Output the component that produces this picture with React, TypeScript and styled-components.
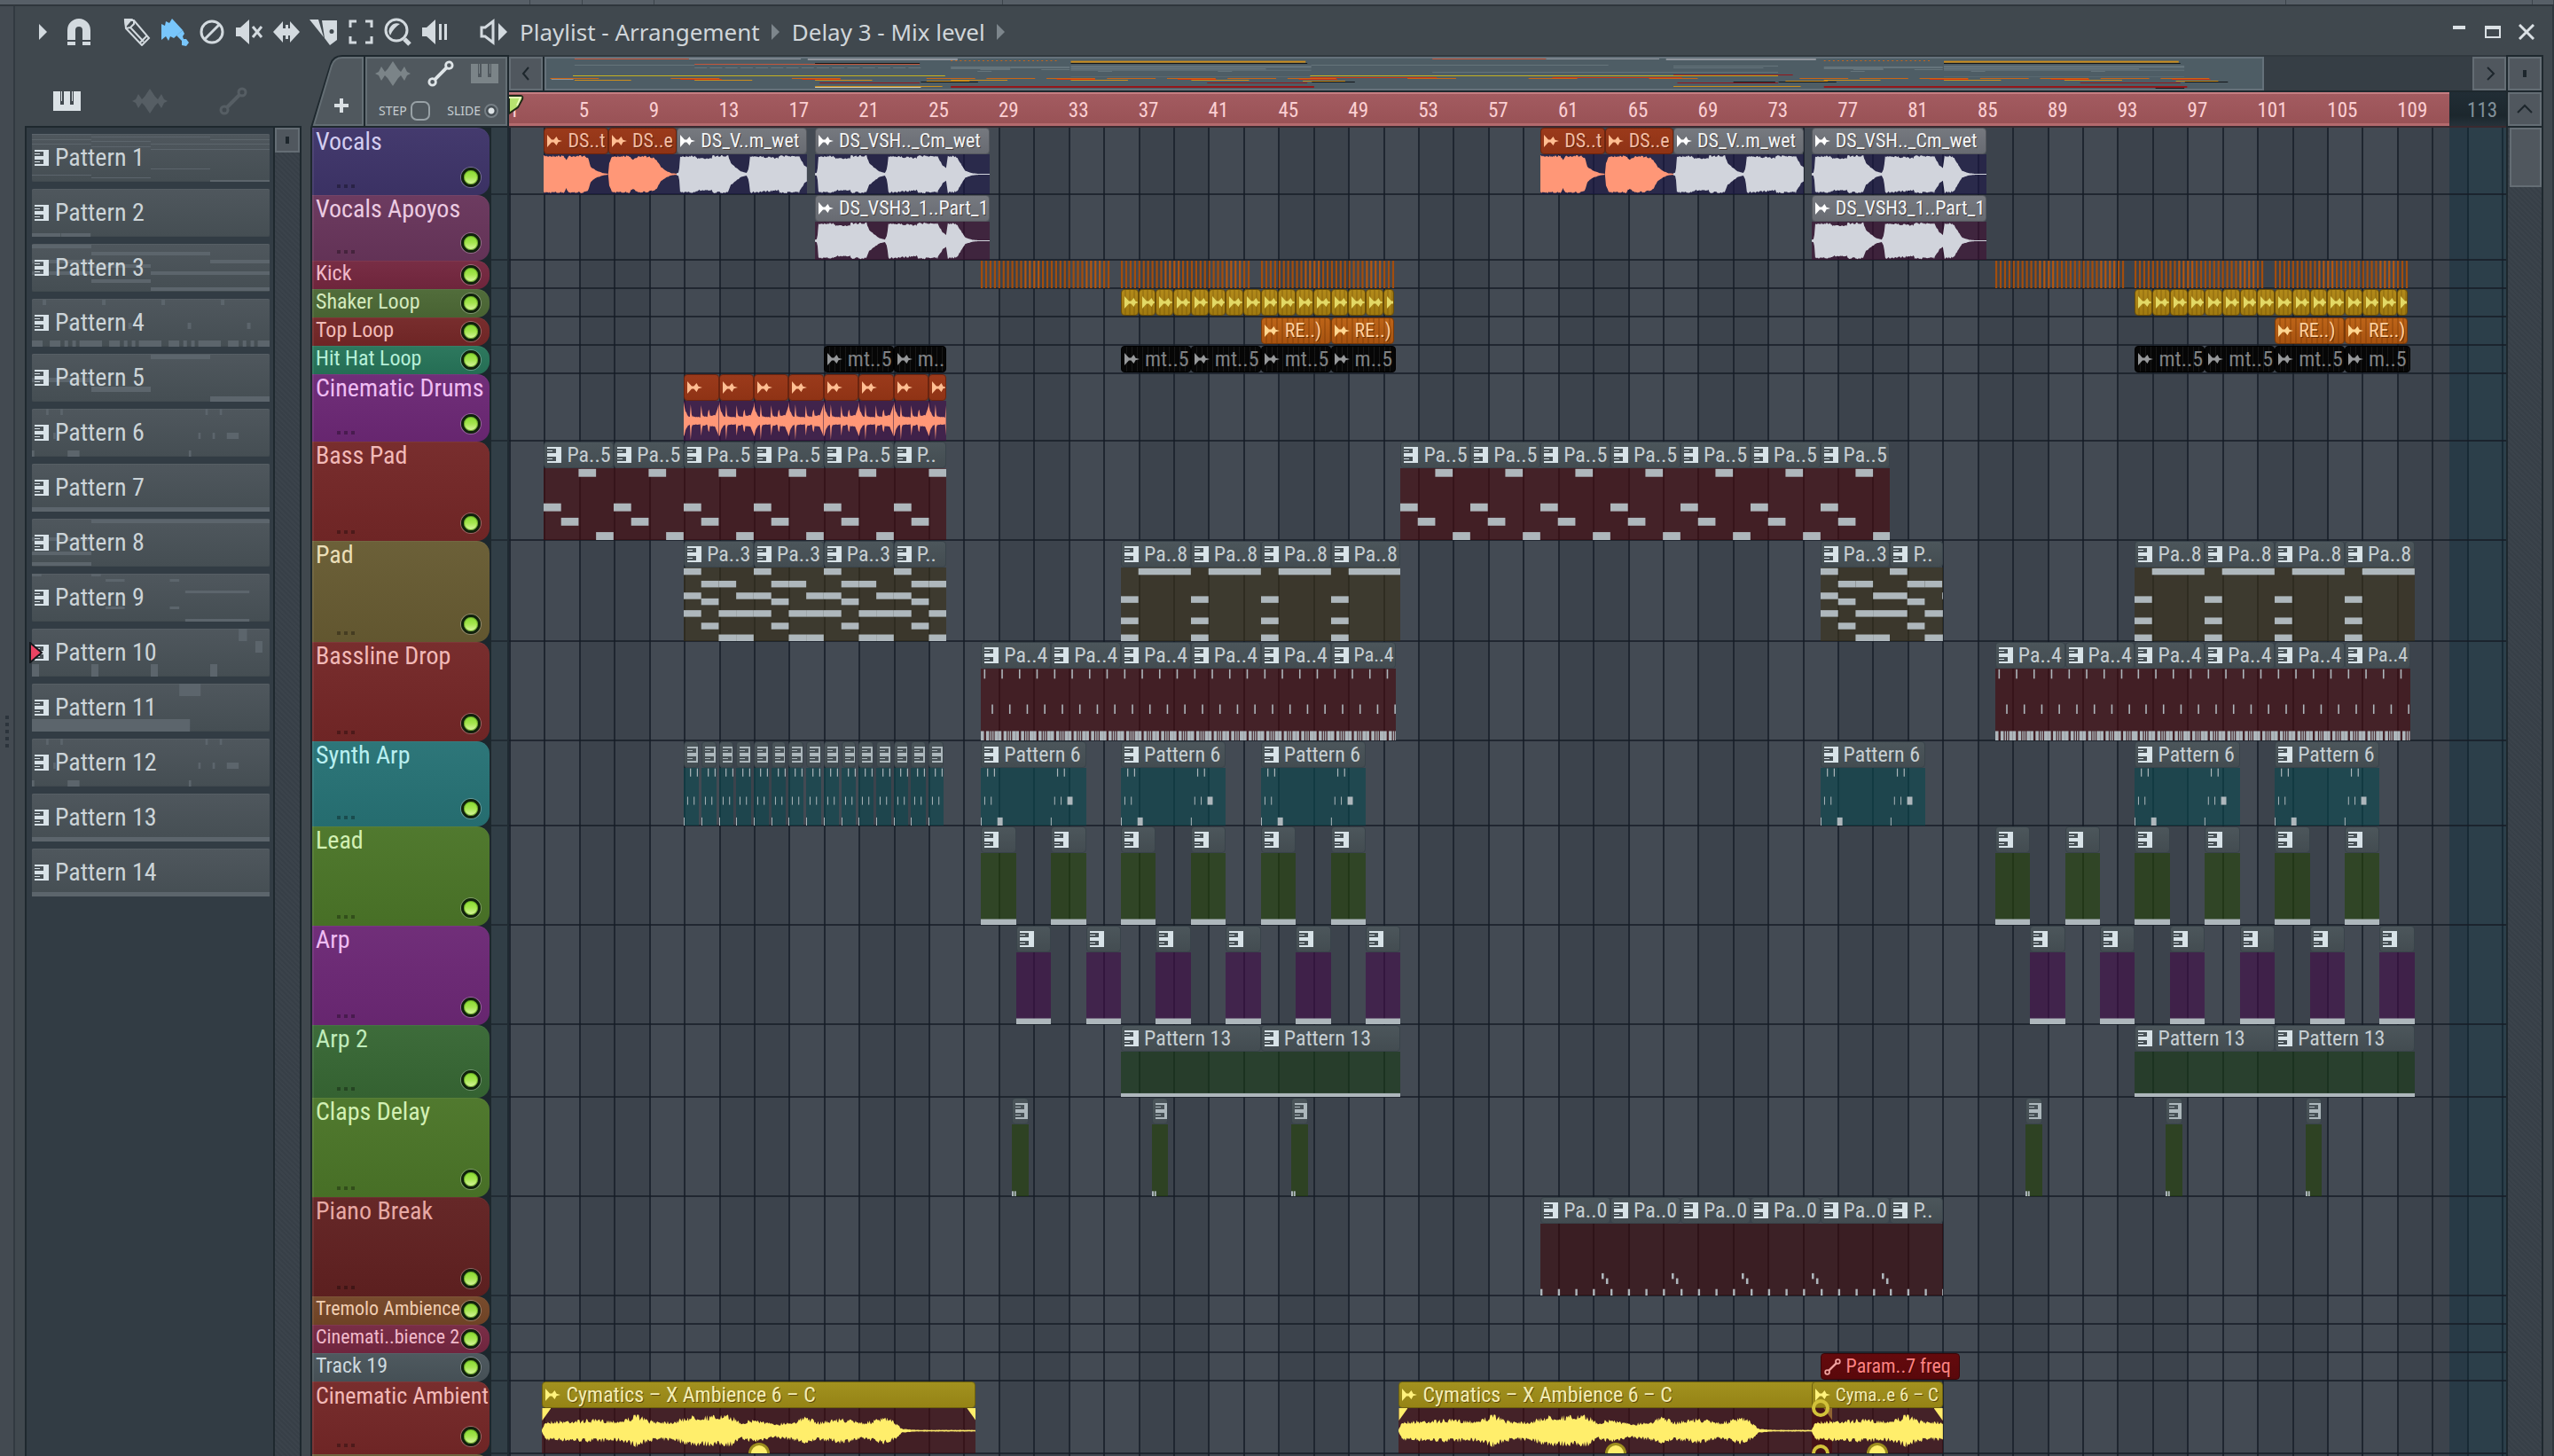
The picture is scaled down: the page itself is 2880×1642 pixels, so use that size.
import React from 'react';
import styled, { createGlobalStyle, css } from 'styled-components';

/* ---------- theme ---------- */

const narrow = '"Roboto Condensed", Roboto, "Liberation Sans", sans-serif';
const humanist = '"Noto Sans", "Open Sans", sans-serif';

const c = {
  frame: '#40484e',
  edge: '#434a51',
  dark: '#1e282e',
  well: '#323c44',
  button: '#50575e',
  rim: '#646d74',
  icon: '#d3dadf',
  note: '#aeb7bc',
};

const Global = createGlobalStyle`
  *, *::before, *::after { box-sizing: border-box; }
  body { margin: 0; background: ${c.frame}; color: #cdd4d9; font-family: ${narrow}; }
  button, input { margin: 0; padding: 0; font: inherit; color: inherit; }
  button { background: none; border: 0; cursor: pointer; }
  svg { display: block; }
`;

/* ---------- timeline scale ---------- */

const VISIBLE_BARS = 114.23;
const SONG_END = 112;
const pct = (bars: number) => `${(bars / VISIBLE_BARS) * 100}%`;
const span = (start: number, end: number) => ({ left: pct(start - 1), width: pct(end - start) });

/* ---------- small drawings ---------- */

const PianoClipIcon = () => (
  <svg width="16" height="18" viewBox="0 0 16 18" aria-hidden="true">
    <path fill="currentColor" fillRule="evenodd" d="M0 0h16v18H0zM0 2v5h10V2zM0 11v5h10v-5z" />
    <path fill="currentColor" d="M0 4h6v1H0zM0 13h6v1H0z" />
  </svg>
);

const AudioClipIcon = () => (
  <svg width="17" height="14" viewBox="0 0 17 14" aria-hidden="true">
    <path fill="currentColor" d="M0 0l5 5.500h2.500l3-3.500 2 3.800L17 7l-4.500 1.200-2 3.800-3-3.500H5L0 14z" />
  </svg>
);

const AutomationIcon = ({ size }: { size: number }) => (
  <svg width={size} height={size} viewBox="0 0 32 32" fill="none" stroke="currentColor" strokeWidth="3" aria-hidden="true">
    <circle cx="26" cy="6" r="4" />
    <circle cx="6" cy="26" r="4" />
    <path d="M9 23L23 9" strokeWidth="4" />
  </svg>
);

const WaveIcon = () => (
  <svg width="40" height="28" viewBox="0 0 40 28" aria-hidden="true">
    <path fill="currentColor" d="M0 14l4-2 3-6 4 6 3-3 6-9 6 9 3 3 4-6 3 6 4 2-4 2-3 6-4-6-3 3-6 9-6-9-3-3-4 6-3-6z" />
  </svg>
);

const KeysIcon = () => (
  <svg width="31" height="22" viewBox="0 0 31 22" aria-hidden="true">
    <path fill="currentColor" fillRule="evenodd" d="M0 0h31v22H0zM8 0v15h4V0zM19 0v15h4V0z" />
    <path fill="currentColor" d="M9 0h1v11H9zM21 0h1v11h-1z" />
  </svg>
);

type ToolName = 'magnet' | 'pencil' | 'brush' | 'ban' | 'mute' | 'slip' | 'slice' | 'select' | 'zoom' | 'play' | 'speaker';

const toolArt: Record<ToolName, React.ReactNode> = {
  magnet: (
    <>
      <path fill="currentColor" d="M3 25V14a13 13 0 0 1 26 0v11h-9V14a4 4 0 0 0-8 0v11z" />
      <path fill="currentColor" d="M3 27h9v4H3zM20 27h9v4h-9z" />
    </>
  ),
  pencil: (
    <g fill="none" stroke="currentColor" strokeWidth="2">
      <path d="M2 3l10 0 17 20-8 8L3 12z" />
      <path d="M3 12l5-1 4-4V3M8 11l15 16M19 28l8-8" />
      <path fill="currentColor" d="M2 2l7 0-6 7z" />
    </g>
  ),
  brush: (
    <g fill="currentColor">
      <path d="M1 7l4 2 1-5 4 2 3-5 12 13-10 9-4-2-2 5-3-5-5 4z" />
      <path d="M18 20l7-6 2 4-2 3 1 3h3l3 4-3 4-5-1v-5z" />
    </g>
  ),
  ban: (
    <g fill="none" stroke="currentColor" strokeWidth="3">
      <circle cx="16" cy="16" r="12" />
      <path d="M8 24L24 8" />
    </g>
  ),
  mute: (
    <>
      <path fill="currentColor" d="M1 11h5L16 2v28L6 21H1z" />
      <path stroke="currentColor" strokeWidth="3" d="M20 10l10 12M30 10L20 22" />
    </>
  ),
  slip: <path fill="currentColor" d="M1 16L12 4v8h3V8h3v4h2V4l11 12-11 12v-8h-2v4h-3v-4h-3v8z" />,
  slice: (
    <>
      <path fill="currentColor" fillRule="evenodd" d="M14 3h17v22l-8 6-6-8zM25 13a2 2 0 1 0 0 5 2 2 0 0 0 0-5z" />
      <path fill="currentColor" d="M0 2h10l6 20z" />
    </>
  ),
  select: <path fill="none" stroke="currentColor" strokeWidth="3" d="M4 11V4h7M21 4h7v7M28 21v7h-7M11 28H4v-7" />,
  zoom: (
    <>
      <circle cx="14" cy="14" r="12" fill="none" stroke="currentColor" strokeWidth="3" />
      <path fill="currentColor" d="M7 20a9 9 0 0 1 11-13q-7 4-11 13z" />
      <path stroke="currentColor" strokeWidth="5" d="M23 24l6 6" />
    </>
  ),
  play: (
    <>
      <path fill="currentColor" d="M1 11h5L16 2v28L6 21H1z" />
      <path fill="currentColor" d="M20 7h3v18h-3zM26 7h3v18h-3z" />
    </>
  ),
  speaker: (
    <>
      <path fill="none" stroke="currentColor" strokeWidth="3" d="M2 11h4l9-7v24l-9-7H2z" />
      <path fill="currentColor" d="M21 6l10 10-10 10z" />
    </>
  ),
};

/* ---------- window frame ---------- */

const Window = styled.div`
  display: flex;
  flex-direction: column;
  height: 100vh;
  overflow: hidden;
  background: ${c.frame};
`;

const HostStrip = styled.div`
  display: flex;
  flex: 0 0 7px;
  background: #575f67;
  border-bottom: 2px solid #2f363c;
`;

const HostCell = styled.div<{ $grow: number }>`
  flex: ${(p) => p.$grow} 0 0;
  border-right: 1px solid #3c444b;
`;

const Shell = styled.div`
  display: flex;
  flex: 1;
  min-height: 0;
`;

const EdgeGrip = styled.div`
  display: flex;
  flex: 0 0 17px;
  flex-direction: column;
  align-items: center;
  justify-content: center;
  gap: 4px;
  background: ${c.edge};
  border-right: 2px solid #323a41;
`;

const GripDot = styled.i`
  width: 4px;
  height: 4px;
  background: #2c343c;
`;

const RightEdge = styled.div`
  flex: 0 0 12px;
  border-right: 2px solid #2f373d;
`;

const Main = styled.main`
  display: flex;
  flex: 1;
  flex-direction: column;
  min-width: 0;
`;

const TitleBar = styled.header`
  display: flex;
  flex: 0 0 55px;
  align-items: center;
  padding: 3px 0 0 21px;
`;

const MenuArrow = styled.button<{ $crumb?: boolean }>`
  display: flex;
  justify-content: center;
  width: ${(p) => (p.$crumb ? 36 : 20)}px;
  color: ${(p) => (p.$crumb ? '#7d868c' : c.icon)};
`;

const ToolGroup = styled.div`
  display: flex;
  padding: 0 8px 0 10px;
`;

const ToolButton = styled.button<{ $active?: boolean; $gap?: number }>`
  display: flex;
  flex: 0 0 42px;
  align-items: center;
  justify-content: center;
  height: 36px;
  margin-left: ${(p) => p.$gap ?? 0}px;
  color: ${(p) => (p.$active ? '#78c6fb' : c.icon)};
`;

const Title = styled.span`
  font-family: ${humanist};
  font-size: 26px;
  line-height: 32px;
  color: #d0d6da;
  white-space: pre;
`;

const WindowButtons = styled.div`
  display: flex;
  margin-left: auto;
`;

const WindowButton = styled.button`
  display: flex;
  align-items: center;
  justify-content: center;
  width: 38px;
  height: 32px;
  color: #dbe1e5;
`;

const Workspace = styled.div`
  display: flex;
  flex: 1;
  min-height: 0;
`;

/* ---------- pattern picker ---------- */

const Picker = styled.aside`
  display: flex;
  flex: 0 0 323px;
  flex-direction: column;
  padding-left: 11px;
`;

const PickerTabs = styled.div`
  display: flex;
  flex: 0 0 80px;
  align-items: center;
  gap: 58px;
  padding: 24px 0 0 32px;
`;

const PickerTab = styled.button<{ $on?: boolean }>`
  color: ${(p) => (p.$on ? '#dbe2e6' : '#565e64')};
`;

const PickerBody = styled.div`
  display: flex;
  flex: 1;
  min-height: 0;
  border: 2px solid ${c.dark};
  border-bottom: 0;
  background: ${c.well};
`;

const PatternList = styled.ul`
  display: flex;
  flex: 1;
  flex-direction: column;
  gap: 8px;
  margin: 0;
  padding: 7px 4px 0 6px;
  list-style: none;
`;

const PatternButton = styled.button`
  position: relative;
  display: flex;
  align-items: center;
  gap: 7px;
  width: 100%;
  height: 54px;
  padding-left: 3px;
  border-radius: 2px;
  background: linear-gradient(#4f575d, #454e53);
  box-shadow: inset 0 1px #565e64, inset 0 -1px #414a4f;
  color: #ccd4d8;
  font-size: 28px;
  line-height: 54px;
  text-align: left;

  > * { position: relative; }
  > svg { color: #d8e2e8; }
`;

const PatternPreview = styled.span`
  && {
    position: absolute;
    inset: 0;
    color: #5c656c;
  }
`;

const PlayMarker = styled.span`
  && {
    position: absolute;
    left: -3px;
    top: 15px;
  }
`;

const scrollWell = css`
  background: repeating-linear-gradient(45deg, #373f47 0 2px, #3b434b 2px 4px);
`;

const PickerScroll = styled.div`
  display: flex;
  flex: 0 0 30px;
  flex-direction: column;
  border-left: 2px solid ${c.dark};
  ${scrollWell}
`;

const ChromeButton = styled.button<{ $w?: number; $h?: number }>`
  display: flex;
  flex: none;
  align-items: center;
  justify-content: center;
  width: ${(p) => (p.$w ? `${p.$w}px` : 'auto')};
  height: ${(p) => p.$h ?? 38}px;
  background: ${c.button};
  border: 2px solid ${c.rim};
  color: #1d262c;
`;

const Pip = styled.i`
  width: 4px;
  height: 8px;
  background: #1d262c;
`;

/* ---------- playlist ---------- */

const Playlist = styled.section`
  display: grid;
  flex: 1;
  min-width: 0;
  grid-template-columns: 224px minmax(0, 1fr) 42px;
  grid-template-rows: 42px 40px minmax(0, 1fr);
  margin-left: 10px;
`;

const Corner = styled.div`
  position: relative;
  display: flex;
  grid-row: 1 / 3;
  isolation: isolate;
`;

const CornerShape = styled.svg`
  position: absolute;
  inset: 0;
  z-index: -1;
`;

const AddTrack = styled.button`
  display: flex;
  flex: 0 0 61px;
  align-items: center;
  justify-content: center;
  padding: 32px 0 0 8px;
`;

const CornerTools = styled.div`
  display: flex;
  flex: 1;
  flex-direction: column;
  justify-content: space-between;
  padding: 5px 12px 3px 12px;
`;

const CornerRow = styled.div<{ $inset?: number }>`
  display: flex;
  align-items: center;
  justify-content: space-between;
  height: 32px;
  padding-left: ${(p) => p.$inset ?? 0}px;
`;

const ModeButton = styled.button<{ $on?: boolean }>`
  color: ${(p) => (p.$on ? '#dfe5e8' : '#7b8488')};
`;

const Option = styled.label`
  display: flex;
  align-items: center;
  gap: 4px;
  color: #c6cdd1;
  font-family: ${humanist};
  font-size: 14px;
  line-height: 22px;
`;

const StepBox = styled.input`
  appearance: none;
  width: 22px;
  height: 22px;
  border: 2px solid #98a1a6;
  border-radius: 7px;
`;

const SlideRadio = styled.input`
  appearance: none;
  width: 16px;
  height: 16px;
  border: 2px solid #767f85;
  border-radius: 50%;
  background: radial-gradient(circle, #dde3e6 0 3px, #454d53 4px);
`;

const Overview = styled.div`
  display: flex;
  background: #363e45;
  border-top: 2px solid #31393f;
  border-bottom: 2px solid ${c.dark};
`;

const OverviewTrack = styled.div`
  flex: 1;
  padding-left: 2px;
  background: linear-gradient(90deg, ${c.dark} 2px, transparent 2px);
`;

const OverviewThumb = styled.div`
  width: 89.2%;
  height: 38px;
  border: 2px solid #65717a;
  background: #4e5d65;
`;

const SideCell = styled.div<{ $top?: number }>`
  padding: ${(p) => p.$top ?? 0}px 2px 0;
  background: ${c.dark};
`;

const Ruler = styled.div`
  position: relative;
  overflow: hidden;
  height: 38px;
  background: linear-gradient(#212d35, #1c272d 70%, #26323a);
`;

const RulerSong = styled.div`
  position: absolute;
  inset: 0 auto 0 0;
  background: linear-gradient(#a35b60, #995256);
  border-top: 2px solid #c57e82;
  border-bottom: 3px solid #b46a6d;
`;

const RulerMark = styled.span<{ $off: boolean }>`
  position: absolute;
  top: 6px;
  color: ${(p) => (p.$off ? '#82919a' : '#fccfd2')};
  font-size: 23px;
  line-height: 30px;
`;

const PlayHead = styled.svg`
  position: absolute;
  left: 0;
  top: 3px;
`;

const RulerCell = styled.div`
  border-bottom: 2px solid #3a2a30;
`;

const Tracks = styled.div`
  position: relative;
  grid-column: 1 / 3;
  overflow: hidden;
  border-left: 2px solid ${c.dark};
`;

const GridUnderlay = styled.div`
  position: absolute;
  inset: 0 0 0 222px;
  display: flex;
  overflow: hidden;
`;

const GridColumn = styled.div<{ $alt: boolean }>`
  flex: 0 0 ${pct(2)};
  border-left: 2px solid #1f2630;
  background: ${(p) => (p.$alt ? '#3c434c' : '#434a53')};
`;

const AfterSong = styled.div`
  position: absolute;
  inset: 0 0 0 auto;
  background: rgba(15, 48, 62, 0.42);
`;

const TrackRow = styled.div<{ $h: number }>`
  position: relative;
  display: flex;
  height: ${(p) => p.$h}px;
`;

const HeadCell = styled.div`
  flex: 0 0 202px;
  background: #1c272d;
`;

const Head = styled.div<{ $bg: string; $ink: string }>`
  position: relative;
  width: 200px;
  height: 100%;
  padding-left: 4px;
  overflow: hidden;
  border-radius: 0 14px 14px 0;
  background: linear-gradient(rgba(255, 255, 255, 0.03), rgba(0, 0, 0, 0.05)), ${(p) => p.$bg};
  box-shadow: inset 0 1px rgba(255, 255, 255, 0.05), inset 2px 0 rgba(255, 255, 255, 0.07);
  color: ${(p) => p.$ink};
  white-space: nowrap;
`;

const TrackName = styled.span<{ $size: number }>`
  display: block;
  font-size: ${(p) => p.$size}px;
  line-height: ${(p) => (p.$size > 24 ? 32 : 28)}px;
`;

const Led = styled.input<{ $low: boolean }>`
  position: absolute;
  right: 10px;
  bottom: ${(p) => (p.$low ? 9 : 5)}px;
  appearance: none;
  width: 22px;
  height: 22px;
  border: 3px solid #10220c;
  border-radius: 50%;
  background: linear-gradient(#86d92f, #a6e650 50%, #dcf7a4);
  box-shadow: inset 0 0 0 1px #6fae2a, 0 0 0 1px rgba(255, 255, 255, 0.3);
`;

const HeadDots = styled.div`
  position: absolute;
  left: 28px;
  bottom: 8px;
  display: flex;
  gap: 4px;

  i {
    width: 4px;
    height: 4px;
    background: rgba(0, 0, 0, 0.3);
  }
`;

const PeakStrip = styled.div`
  flex: 0 0 20px;
  background: #313e46;
  border-right: 2px solid #1f2a31;
  border-bottom: 2px solid #212b33;
`;

const Lane = styled.div`
  position: relative;
  flex: 1;

  &::after {
    content: '';
    position: absolute;
    inset: auto 0 0 0;
    height: 2px;
    background: rgba(22, 28, 38, 0.75);
  }
`;

const TracksScroll = styled.div`
  padding: 0 2px;
  border-left: 2px solid ${c.dark};
  border-right: 2px solid ${c.dark};
  ${scrollWell}
`;

/* ---------- clips ---------- */

type Tone = 'pattern' | 'rust' | 'grey' | 'gold' | 'orange' | 'black' | 'olive' | 'auto';

const tones: Record<Tone, { bg: string; ink: string; icon: string; rim: string }> = {
  pattern: { bg: 'linear-gradient(#4c565b, #434c51)', ink: '#c6ced2', icon: '#d8e3e8', rim: '#39434a' },
  rust: { bg: 'linear-gradient(#9b3a1b, #8f3315)', ink: '#f3bda4', icon: '#ffbe92', rim: '#6b240f' },
  grey: { bg: 'linear-gradient(#76797f, #686b72)', ink: '#f2f4f6', icon: '#ffffff', rim: '#55585e' },
  gold: {
    bg: 'repeating-linear-gradient(90deg, transparent 0 3px, rgba(90, 60, 0, 0.22) 3px 5px), linear-gradient(#b28a1a, #a07a10)',
    ink: '#e6dc6a',
    icon: '#e3d966',
    rim: '#6a4e08',
  },
  orange: {
    bg: 'repeating-linear-gradient(90deg, transparent 0 4px, rgba(110, 50, 0, 0.3) 4px 6px), linear-gradient(#bd6418, #a85310)',
    ink: '#ffcf9c',
    icon: '#ffd792',
    rim: '#7a3a08',
  },
  black: {
    bg: 'repeating-linear-gradient(90deg, transparent 0 5px, rgba(255, 255, 255, 0.07) 5px 6px), #060606',
    ink: '#7f8183',
    icon: '#96989a',
    rim: '#000000',
  },
  olive: { bg: 'linear-gradient(#a2911f, #958315)', ink: '#f3ecb4', icon: '#fff27c', rim: '#6f620e' },
  auto: { bg: 'linear-gradient(#640a0d, #5a080b)', ink: '#ff8283', icon: '#f0a3a0', rim: '#3c0507' },
};

const ClipBox = styled.div`
  position: absolute;
  top: 0;
  bottom: 1px;
  z-index: 1;
  display: flex;
  flex-direction: column;
  overflow: hidden;
`;

const ClipHeader = styled.div<{ $tone: Tone; $size?: number }>`
  display: flex;
  flex: 0 0 30px;
  align-items: center;
  gap: 6px;
  padding-left: 3px;
  overflow: hidden;
  border: 1px solid ${(p) => tones[p.$tone].rim};
  border-radius: 4px;
  background: ${(p) => tones[p.$tone].bg};
  color: ${(p) => tones[p.$tone].ink};
  font-size: ${(p) => p.$size ?? 24}px;
  line-height: 28px;
  white-space: pre;
  text-shadow: ${(p) => (p.$tone === 'pattern' || p.$tone === 'black' ? 'none' : '1px 1px rgba(40, 15, 0, 0.5)')};

  svg {
    flex: none;
    color: ${(p) => tones[p.$tone].icon};
  }
`;

const ClipBody = styled.div<{ $bg: string }>`
  position: relative;
  flex: 1;
  min-height: 0;
  background: ${(p) => p.$bg};
  color: ${c.note};

  > svg {
    width: 100%;
    height: 100%;
  }
`;

const BodyCorner = styled.i<{ $side: 'left' | 'right' }>`
  position: absolute;
  top: 0;
  ${(p) => p.$side}: 0;
  width: 10px;
  height: 14px;
  background: #ffee6b;
  clip-path: ${(p) => (p.$side === 'left' ? 'polygon(0 0, 100% 0, 0 100%)' : 'polygon(0 0, 100% 0, 100% 100%)')};
`;

const TensionKnob = styled.i`
  position: absolute;
  left: 50%;
  bottom: -12px;
  width: 24px;
  height: 24px;
  margin-left: -12px;
  border: 3px solid #9c8d1e;
  border-radius: 50%;
  background: #ffee6b;
`;

const FadeKnob = styled.i<{ $end: 'top' | 'bottom' }>`
  position: absolute;
  left: 0;
  ${(p) => p.$end}: -10px;
  width: 20px;
  height: 20px;
  border: 4px solid #d2c23a;
  border-radius: 50%;
`;

/** Tint a clip body so that the lane grid stays visible beneath it. */
const tint = (r: number, g: number, b: number) => {
  const solve = (v: number, under: number) => Math.max(0, Math.round((v - under * 0.4) / 0.6));
  return `rgba(${solve(r, 67)}, ${solve(g, 74)}, ${solve(b, 83)}, 0.6)`;
};

type Note = [x: number, y: number, w: number, h: number];

const everyBar = (bars: number, make: (bar: number) => Note[]) =>
  Array.from({ length: bars }, (_, bar) => make(bar)).flat();

const arpHits = (at: number): Note[] => [
  [at + 0.36, 1, 0.06, 14],
  [at + 0.75, 1, 0.06, 14],
  [at + 0.2, 50, 0.05, 14],
  [at + 0.57, 50, 0.05, 14],
  [at, 86, 0.05, 14],
];

const phrases: Record<string, Note[]> = {
  p5: [[0, 49, 1, 11], [1, 69, 1, 11], [2, 1, 1, 11], [3, 89, 1, 11]],
  p3: [
    [0, 1, 1, 9], [0, 34, 1, 9], [0, 58, 1, 9],
    [1, 18, 1, 9], [1, 42, 1, 9], [1, 75, 1, 9],
    [2, 18, 1, 9], [2, 58, 1, 9], [2, 91, 1, 9],
    [3, 34, 1, 9], [3, 58, 1, 9], [3, 91, 1, 9],
  ],
  p8: [[1, 1, 3, 9], [0, 39, 1, 9], [0, 68, 1, 9], [0, 91, 1, 9]],
  p4: everyBar(4, (b) => [
    [b + 0.18, 1, 0.08, 13],
    [b + 0.62, 50, 0.08, 13],
    [b, 87, 0.18, 13],
    [b + 0.3, 87, 0.18, 13],
    [b + 0.54, 87, 0.07, 13],
    [b + 0.66, 87, 0.07, 13],
    [b + 0.79, 87, 0.21, 13],
  ]),
  p6: [...arpHits(0), ...arpHits(4), [0.95, 86, 0.3, 14], [4.95, 50, 0.3, 14]],
  hold: [[0, 92, 99, 8]],
  clap: [[0, 93, 0.1, 7], [0.14, 93, 0.1, 7]],
  p10: [...everyBar(4, (b): Note[] => [[b, 91, 0.12, 9]]), [3.5, 69, 0.13, 8], [3.75, 76, 0.13, 8]],
};

const NoteRoll = ({ notes, length }: { notes: Note[]; length: number }) => (
  <svg viewBox={`0 0 ${length} 100`} preserveAspectRatio="none" aria-hidden="true">
    {notes.map(([x, y, w, h], i) => (
      <rect key={i} x={x} y={y} width={w} height={h} fill="currentColor" />
    ))}
  </svg>
);

type Envelope = [at: number, level: number][];

const envelopes: Record<string, { shape: Envelope; rough: number; repeat?: boolean; color: string; gain?: number }> = {
  voice: {
    color: '#d1d4dc',
    rough: 0.1,
    shape: [
      [0, 0.05], [0.14, 0.1], [0.18, 0.98], [1, 1], [1.2, 0.88], [2, 0.88], [2.05, 1], [2.95, 1], [3.1, 0.6], [3.4, 0.35],
      [3.7, 0.15], [4, 0.07], [4.12, 0.3], [4.2, 1], [5, 0.95], [5.8, 0.88], [5.9, 1], [7, 1], [7.3, 0.5], [7.5, 0.35],
      [7.6, 1], [8.1, 0.95], [8.4, 0.5], [8.6, 0.18], [9, 0.06], [9.4, 0.02], [10, 0.02],
    ],
  },
  tail: {
    color: '#ff9777',
    rough: 0.1,
    shape: [[0, 1], [1.15, 1], [1.3, 0.78], [1.45, 1], [2.4, 1], [2.55, 0.85], [2.7, 0.4], [3, 0.2], [3.4, 0.06], [3.8, 0.02]],
  },
  tailB: {
    color: '#ff9777',
    rough: 0.1,
    shape: [
      [0, 0.1], [0.05, 0.6], [0.2, 0.98], [1.2, 1], [1.4, 0.78], [1.7, 1], [2.4, 0.95], [2.75, 0.8], [3, 0.4], [3.3, 0.18],
      [3.6, 0.06], [4, 0.02],
    ],
  },
  drums: {
    color: '#ff9777',
    rough: 0.2,
    repeat: true,
    shape: [
      [0, 1], [0.08, 0.6], [0.25, 0.28], [0.36, 0.22], [0.4, 1], [0.46, 0.26], [0.95, 0.2], [1, 0.95], [1.06, 0.28], [1.38, 0.22],
      [1.42, 0.85], [1.5, 0.3], [1.8, 0.35], [1.94, 0.7], [2, 0.8],
    ],
  },
  ambience: {
    color: '#ffee6b',
    rough: 0.38,
    gain: 0.85,
    shape: [
      [0, 0.05], [0.2, 0.55], [1.5, 0.6], [3, 0.65], [4.5, 0.6], [5.5, 0.95], [6.1, 0.6], [7.5, 0.55], [8.5, 0.85], [10.8, 0.88],
      [11.4, 0.5], [12.2, 0.68], [13.2, 0.4], [14.4, 0.55], [15.2, 0.85], [15.7, 0.5], [17, 0.72], [18.5, 0.5], [19.7, 0.78],
      [20.2, 0.5], [20.6, 0.12], [21.4, 0.05], [25, 0.05],
    ],
  },
};

const levelAt = (shape: Envelope, at: number) => {
  const next = shape.findIndex(([x]) => x >= at);
  if (next <= 0) return shape[next === 0 ? 0 : shape.length - 1][1];
  const [x0, y0] = shape[next - 1];
  const [x1, y1] = shape[next];
  return y0 + ((y1 - y0) * (at - x0)) / (x1 - x0);
};

const Waveform = ({ name, length }: { name: string; length: number }) => {
  const { shape, rough, repeat, color, gain = 1 } = envelopes[name];
  const period = shape[shape.length - 1][0];
  let seed = 7;
  const noise = () => {
    seed = (seed * 16807) % 2147483647;
    return seed / 2147483647;
  };
  const steps = Math.round(length * 20);
  const top: string[] = [];
  const bottom: string[] = [];
  for (let i = 0; i <= steps; i += 1) {
    const x = (i / steps) * length;
    const base = 48 * gain * levelAt(shape, repeat ? x % period : x);
    top.push(`${x.toFixed(3)} ${(50 - base * (1 - rough * noise())).toFixed(1)}`);
    bottom.unshift(`${x.toFixed(3)} ${(50 + base * (1 - rough * noise())).toFixed(1)}`);
  }
  return (
    <svg viewBox={`0 0 ${length} 100`} preserveAspectRatio="none" aria-hidden="true">
      <path fill={color} d={`M${top.join('L')}L${bottom.join('L')}z`} />
    </svg>
  );
};

interface ClipData {
  at: number;
  to: number;
  label?: string;
  tone?: Tone;
  phrase?: string;
  wave?: string;
  faded?: boolean;
  size?: number;
  crossfade?: boolean;
}

const Dimmer = styled.span`
  display: flex;
  opacity: 0.7;
`;

const clipIcon = (tone: Tone) => {
  if (tone === 'pattern') return <PianoClipIcon />;
  if (tone === 'auto') return <AutomationIcon size={19} />;
  return <AudioClipIcon />;
};

const Clip = ({ clip, body }: { clip: ClipData; body?: string }) => {
  const tone = clip.tone ?? 'pattern';
  const length = clip.to - clip.at;
  return (
    <ClipBox style={span(clip.at, clip.to)}>
      <ClipHeader $tone={tone} $size={clip.size}>
        {clip.faded ? <Dimmer>{clipIcon(tone)}</Dimmer> : clipIcon(tone)}
        {clip.label}
      </ClipHeader>
      {body && (
        <ClipBody $bg={body}>
          {clip.phrase && <NoteRoll notes={phrases[clip.phrase]} length={length} />}
          {clip.wave && <Waveform name={clip.wave} length={length} />}
          {clip.wave === 'ambience' && (
            <>
              {!clip.crossfade && <BodyCorner $side="left" />}
              <BodyCorner $side="right" />
              <TensionKnob />
              {clip.crossfade && (
                <>
                  <FadeKnob $end="top" />
                  <FadeKnob $end="bottom" />
                </>
              )}
            </>
          )}
        </ClipBody>
      )}
    </ClipBox>
  );
};

const KickRun = styled.div`
  position: absolute;
  top: 0;
  bottom: 1px;
  z-index: 1;

  > svg {
    width: 100%;
    height: 100%;
  }
`;

const KickHits = ({ at, to }: { at: number; to: number }) => {
  const hits = Math.round((to - at) * 4);
  return (
    <KickRun style={span(at, to)}>
      <svg viewBox={`0 0 ${hits} 10`} preserveAspectRatio="none" aria-hidden="true">
        {Array.from({ length: hits }, (_, i) => (
          <rect key={i} x={i} y={0} width={0.45} height={10} fill={i % 14 > 9 ? '#b4560e' : '#a34d0c'} />
        ))}
      </svg>
    </KickRun>
  );
};

/* ---------- song data ---------- */

const run = (start: number, end: number, step: number, rest: Partial<ClipData>, short?: string): ClipData[] => {
  const out: ClipData[] = [];
  for (let at = start; at < end; at += step) {
    const to = Math.min(at + step, end);
    out.push({ at, to, ...rest, label: short && to - at < step ? short : rest.label });
  }
  return out;
};

const every = (start: number, end: number, step: number, length: number, rest: Partial<ClipData>): ClipData[] => {
  const out: ClipData[] = [];
  for (let at = start; at < end; at += step) out.push({ at, to: at + length, ...rest });
  return out;
};

const shift = (clips: ClipData[], bars: number) => clips.map((k) => ({ ...k, at: k.at + bars, to: k.to + bars }));
const twice = (clips: ClipData[], bars: number) => [...clips, ...shift(clips, bars)];

interface TrackData {
  name: string;
  height: number;
  color: string;
  ink: string;
  size?: number;
  body?: string;
  clips?: ClipData[];
  kicks?: [number, number][];
}

const tracks: TrackData[] = [
  {
    name: 'Vocals', height: 76, color: '#3e3469', ink: '#d3cdf0', body: tint(43, 42, 75),
    clips: twice([
      { at: 3, to: 6.68, label: 'DS..t', tone: 'rust', wave: 'tail', size: 22 },
      { at: 6.68, to: 10.6, label: 'DS..e', tone: 'rust', wave: 'tailB', size: 22 },
      { at: 10.6, to: 18.05, label: 'DS_V..m_wet', tone: 'grey', wave: 'voice', size: 22 },
      { at: 18.5, to: 28.5, label: 'DS_VSH.._Cm_wet', tone: 'grey', wave: 'voice', size: 22 },
    ], 57),
  },
  {
    name: 'Vocals Apoyos', height: 74, color: '#68355b', ink: '#eccbe2', body: tint(64, 38, 62),
    clips: twice([{ at: 18.5, to: 28.5, label: 'DS_VSH3_1..Part_1', tone: 'grey', wave: 'voice', size: 22 }], 57),
  },
  {
    name: 'Kick', height: 32, color: '#74273f', ink: '#f0b9ca', size: 24,
    kicks: [[28, 35.5], [36, 43.5], [44, 51.75], [86, 93.5], [94, 101.5], [102, 109.75]],
  },
  {
    name: 'Shaker Loop', height: 32, color: '#4c6835', ink: '#d3e9bd', size: 24,
    clips: twice(run(36, 51.6, 1, { tone: 'gold' }), 58),
  },
  {
    name: 'Top Loop', height: 32, color: '#742727', ink: '#f2bcb8', size: 24,
    clips: twice(run(44, 51.6, 4, { tone: 'orange', label: 'RE..)', size: 22 }), 58),
  },
  {
    name: 'Hit Hat Loop', height: 32, color: '#277459', ink: '#b6efd8', size: 24,
    clips: [
      ...run(19, 26, 4, { tone: 'black', label: 'mt..5' }, 'm..'),
      ...twice(run(36, 51.73, 4, { tone: 'black', label: 'mt..5' }, 'm..5'), 58),
    ],
  },
  {
    name: 'Cinematic Drums', height: 76, color: '#6c2875', ink: '#efbdf3', body: tint(66, 36, 76),
    clips: run(11, 26, 2, { tone: 'rust', wave: 'drums' }),
  },
  {
    name: 'Bass Pad', height: 112, color: '#742727', ink: '#f2b9b7', body: tint(69, 35, 40),
    clips: [
      ...run(3, 26, 4, { label: 'Pa..5', phrase: 'p5' }, 'P..'),
      ...run(52, 80, 4, { label: 'Pa..5', phrase: 'p5' }),
    ],
  },
  {
    name: 'Pad', height: 114, color: '#675b32', ink: '#ebdfb8', body: tint(62, 59, 47),
    clips: [
      ...run(11, 26, 4, { label: 'Pa..3', phrase: 'p3' }, 'P..'),
      ...run(36, 52, 4, { label: 'Pa..8', phrase: 'p8' }),
      ...run(76, 83, 4, { label: 'Pa..3', phrase: 'p3' }, 'P..'),
      ...run(94, 110, 4, { label: 'Pa..8', phrase: 'p8' }),
    ],
  },
  {
    name: 'Bassline Drop', height: 112, color: '#742727', ink: '#f2b9b7', body: tint(69, 35, 40),
    clips: twice([
      ...run(28, 48, 4, { label: 'Pa..4', phrase: 'p4' }),
      { at: 48, to: 51.73, label: 'Pa..4', phrase: 'p4', size: 22 },
    ], 58),
  },
  {
    name: 'Synth Arp', height: 96, color: '#277275', ink: '#b8eff0', body: tint(33, 72, 80),
    clips: [
      ...every(11, 26, 1, 0.85, { phrase: 'p6', faded: true }),
      ...every(28, 52, 8, 6, { label: 'Pattern 6', phrase: 'p6' }),
      { at: 76, to: 82, label: 'Pattern 6', phrase: 'p6' },
      ...every(94, 110, 8, 6, { label: 'Pattern 6', phrase: 'p6' }),
    ],
  },
  {
    name: 'Lead', height: 112, color: '#4b7528', ink: '#d3f0b4', body: tint(49, 70, 38),
    clips: twice(every(28, 50, 4, 2, { phrase: 'hold' }), 58),
  },
  {
    name: 'Arp', height: 112, color: '#6c2875', ink: '#efbdf3', body: tint(66, 36, 76),
    clips: twice(every(30, 52, 4, 2, { phrase: 'hold' }), 58),
  },
  {
    name: 'Arp 2', height: 82, color: '#376734', ink: '#c0ecbb', body: tint(42, 65, 46),
    clips: twice(run(36, 52, 8, { label: 'Pattern 13', phrase: 'hold' }), 58),
  },
  {
    name: 'Claps Delay', height: 112, color: '#4b7528', ink: '#d3f0b4', body: tint(49, 70, 38),
    clips: twice(every(29.75, 46, 8, 0.95, { phrase: 'clap', faded: true }), 58),
  },
  {
    name: 'Piano Break', height: 112, color: '#612121', ink: '#e7a9a5', body: tint(61, 33, 38),
    clips: run(60, 83, 4, { label: 'Pa..0', phrase: 'p10' }, 'P..'),
  },
  { name: 'Tremolo Ambience', height: 32, color: '#744627', ink: '#f0cdb0', size: 22 },
  { name: 'Cinemati..bience 2', height: 32, color: '#752741', ink: '#f0b9ca', size: 22 },
  {
    name: 'Track 19', height: 32, color: '#49545a', ink: '#ccd8de', size: 24,
    clips: [{ at: 76, to: 84, label: 'Param..7 freq', tone: 'auto', size: 22 }],
  },
  {
    name: 'Cinematic Ambient', height: 82, color: '#742727', ink: '#f2b9b7', size: 26, body: tint(69, 35, 40),
    clips: [
      { at: 2.9, to: 27.7, label: 'Cymatics – X Ambience 6 – C', tone: 'olive', wave: 'ambience' },
      { at: 51.9, to: 76.7, label: 'Cymatics – X Ambience 6 – C', tone: 'olive', wave: 'ambience' },
      { at: 75.5, to: 83, label: 'Cyma..e 6 – C', tone: 'olive', wave: 'ambience', size: 21, crossfade: true },
    ],
  },
  { name: '', height: 32, color: '#675b32', ink: '#ebdfb8' },
];

/* Pattern previews are drawn on a grid of 100 x 54. */
const previews: Note[][] = [
  [[0, 0, 25, 1], [0, 6, 25, 1], [0, 11, 25, 1], [25, 3, 25, 1], [25, 8, 25, 1], [25, 14, 25, 1], [50, 3, 25, 1], [50, 11, 25, 1], [50, 17, 25, 1], [75, 6, 25, 1], [75, 11, 25, 1], [75, 17, 25, 1], [50, 39, 25, 1], [0, 46, 25, 1], [25, 49, 25, 1], [75, 52, 25, 2]],
  [[0, 50, 12, 4], [12.200, 50, 12.500, 4]],
  [[0, 1, 25, 4], [25, 9, 50, 4], [75, 18, 25, 4], [0, 18, 25, 4], [25, 23, 25, 4], [0, 31, 25, 4], [50, 31, 50, 4], [25, 40, 25, 4], [50, 49, 50, 4]],
  everyBar(4, (b) => [
    [b * 25 + 4.5, 1, 1.500, 6], [b * 25 + 15.500, 27, 1.500, 7],
    [b * 25, 47, 4.5, 7], [b * 25 + 7.5, 47, 4.5, 7], [b * 25 + 13.700, 47, 1.500, 7], [b * 25 + 17, 47, 1.500, 7], [b * 25 + 20, 47, 5, 7],
  ]),
  [[50, 1, 25, 5], [0, 27, 25, 5], [25, 37, 25, 6], [75, 48, 25, 6]],
  [[6, 0, 1, 7], [12, 0, 1, 7], [73, 0, 1, 7], [79, 0, 1, 7], [9, 27, 1, 7], [70, 27, 1, 7], [76, 27, 1, 7], [82, 27, 5, 7], [15, 47, 5, 7], [0, 47, 1, 7], [66, 47, 1, 7]],
  [[0, 49, 100, 5]],
  [[25, 1, 75, 4], [0, 21, 25, 4], [0, 37, 25, 4], [0, 49, 25, 4]],
  [[0, 0, 4, 3], [25, 0, 4, 3], [31, 6, 8, 3], [58, 6, 4, 3], [64.500, 19, 27, 3], [31, 37, 8, 3], [58, 37, 4, 3], [64.500, 51, 27, 3]],
  [[87, 0, 3.500, 14], [94, 14, 3, 13], [0, 40, 3, 14], [25, 40, 3, 14], [50, 40, 3, 14], [75, 40, 3, 14]],
  [[62, 0, 9, 14], [0, 40, 66.500, 14]],
  [[6, 0, 1, 7], [12, 0, 1, 7], [73, 0, 1, 7], [79, 0, 1, 7], [9, 27, 1, 7], [70, 27, 1, 7], [76, 27, 1, 7], [82, 27, 5, 7], [15, 47, 5, 7], [0, 47, 1, 7], [66, 47, 1, 7]],
  [[0, 49, 100, 5]],
  [[0, 49, 100, 5]],
];

/* ---------- song overview ---------- */

type Dash = [x1: number, x2: number, y: number, color: string, h?: number];
const ink = { rust: '#c4573b', pale: '#8f949c', dim: '#65747b', black: '#12171a', amber: '#ca8d1d', hot: '#cb6615', red: '#cc3515', wine: '#94171b', sun: '#c3b121' };

const dropSection: Dash[] = [
  [1015, 1430, 41, ink.amber, 6], [1015, 1433, 48, ink.black],
  [803, 908, 60, ink.dim, 9], [908, 1013, 60, ink.dim, 6], [855, 908, 69, ink.dim], [963, 1013, 69, ink.dim], [850, 875, 75, ink.dim],
  [1015, 1440, 57, ink.dim, 8], [1015, 1360, 66, ink.dim, 5], [1015, 1440, 71, ink.dim], [1063, 1088, 75, ink.dim], [1275, 1300, 75, ink.dim],
  [1015, 1440, 93, '#586870'], [803, 903, 105, ink.amber], [1015, 1116, 105, ink.amber], [1228, 1330, 105, ink.amber],
  [1256, 1433, 114, ink.wine], [803, 1445, 126, ink.wine, 6], [1425, 1500, 108, ink.amber], [1441, 1517, 111, ink.black],
  ...[760, 866, 972, 1079, 1185, 1292, 1398].map((x): Dash => [x, x + 86, 99, ink.hot]),
  ...[990, 1204, 1418].map((x): Dash => [x, x + 68, 102, ink.red]),
  ...Array.from({ length: 24 }, (_, i): Dash => [803 + i * 8, 806 + i * 8, 39, ink.hot]),
];

const overview: Dash[] = [
  [138, 340, 33, ink.rust], [340, 538, 33, ink.pale], [550, 815, 33, ink.pale, 6],
  [1654, 1855, 33, ink.rust], [1855, 2055, 33, ink.pale], [2067, 2332, 33, ink.pale, 6],
  [138, 350, 54, ink.dim], [350, 748, 51, ink.rust], [563, 748, 48, ink.black],
  ...Array.from({ length: 15 }, (_, i): Dash => [350 + i * 27, 372 + i * 27, 63, ink.dim]),
  ...dropSection,
  ...dropSection.map(([a, b, y, col, h]): Dash => [a + 1543, b + 1543, y, col, h]),
  [135, 793, 90, ink.sun], [1438, 2265, 90, ink.sun], [1438, 1662, 96, ink.red], [1866, 2095, 96, ink.red],
  [97, 136, 102, ink.pale], [325, 398, 102, ink.red], [540, 608, 102, ink.red],
  ...[95, 308, 522, 1610, 1824, 2037].map((x): Dash => [x, x + 86, 99, ink.hot]),
  [138, 238, 105, ink.amber], [350, 452, 105, ink.amber], [563, 664, 105, ink.amber], [760, 836, 108, ink.amber],
  [571, 748, 114, ink.wine], [750, 851, 111, ink.black], [563, 788, 126, ink.amber], [563, 750, 129, '#d9cfae'],
  [1440, 1965, 54, ink.dim], [1654, 2265, 78, ink.dim], [2080, 2265, 57, ink.dim], [2080, 2239, 63, ink.dim],
  [2080, 2291, 87, ink.wine], [2278, 2353, 108, ink.amber], [2087, 2265, 114, ink.wine], [2186, 2260, 111, ink.black],
  [2266, 2368, 111, ink.black], [2080, 2305, 126, ink.amber], [2932, 2983, 132, ink.black],
];

const SongOverview = () => (
  <svg width="100%" height="34" viewBox="88 33 3033 102" preserveAspectRatio="none" role="img" aria-label="Song overview">
    {overview.map(([a, b, y, col, h = 3], i) => (
      <rect key={i} x={a} y={y} width={b - a} height={h} fill={col} />
    ))}
  </svg>
);

/* ---------- views ---------- */

const RightArrow = () => (
  <svg width="9" height="18" viewBox="0 0 9 18" aria-hidden="true">
    <path fill="currentColor" d="M0 0l9 9-9 9z" />
  </svg>
);

const Chevron = ({ d }: { d: string }) => (
  <svg width="18" height="18" viewBox="0 0 18 18" fill="none" stroke="currentColor" strokeWidth="2" aria-hidden="true">
    <path d={d} />
  </svg>
);

const tools: { art: ToolName; label: string; active?: boolean; gap?: number }[] = [
  { art: 'magnet', label: 'Snap' },
  { art: 'pencil', label: 'Draw', gap: 24 },
  { art: 'brush', label: 'Paint', active: true },
  { art: 'ban', label: 'Delete' },
  { art: 'mute', label: 'Mute' },
  { art: 'slip', label: 'Slip' },
  { art: 'slice', label: 'Slice' },
  { art: 'select', label: 'Select' },
  { art: 'zoom', label: 'Zoom' },
  { art: 'play', label: 'Play selected' },
  { art: 'speaker', label: 'Preview', gap: 24 },
];

const TopBar = () => (
  <TitleBar>
    <MenuArrow aria-label="Menu"><RightArrow /></MenuArrow>
    <ToolGroup>
      {tools.map((t) => (
        <ToolButton key={t.art} aria-label={t.label} $active={t.active} $gap={t.gap}>
          <svg width="32" height="32" viewBox="0 0 32 32" aria-hidden="true">{toolArt[t.art]}</svg>
        </ToolButton>
      ))}
    </ToolGroup>
    <Title>Playlist - Arrangement</Title>
    <MenuArrow $crumb aria-label="Choose arrangement"><RightArrow /></MenuArrow>
    <Title>Delay 3 - Mix level</Title>
    <MenuArrow $crumb aria-label="Choose target"><RightArrow /></MenuArrow>
    <WindowButtons>
      <WindowButton aria-label="Minimize">
        <svg width="18" height="18" viewBox="0 0 18 18"><path fill="currentColor" d="M2 2h14v4H2z" /></svg>
      </WindowButton>
      <WindowButton aria-label="Maximize">
        <svg width="18" height="18" viewBox="0 0 18 18"><path fill="currentColor" fillRule="evenodd" d="M0 2h18v14H0zM2 6v8h14V6z" /></svg>
      </WindowButton>
      <WindowButton aria-label="Close">
        <svg width="18" height="18" viewBox="0 0 18 18"><path stroke="currentColor" strokeWidth="3" d="M1 1l16 16M17 1L1 17" /></svg>
      </WindowButton>
    </WindowButtons>
  </TitleBar>
);

const PatternPicker = () => (
  <Picker>
    <PickerTabs>
      <PickerTab $on aria-label="Patterns"><KeysIcon /></PickerTab>
      <PickerTab aria-label="Audio clips"><WaveIcon /></PickerTab>
      <PickerTab aria-label="Automation clips"><AutomationIcon size={32} /></PickerTab>
    </PickerTabs>
    <PickerBody>
      <PatternList>
        {previews.map((notes, i) => (
          <li key={i}>
            <PatternButton>
              <PatternPreview>
                <svg width="100%" height="54" viewBox="0 0 100 54" preserveAspectRatio="none" aria-hidden="true">
                  {notes.map(([x, y, w, h], n) => (
                    <rect key={n} x={x} y={y} width={w} height={h} fill="currentColor" />
                  ))}
                </svg>
              </PatternPreview>
              <PianoClipIcon />
              <span>Pattern {i + 1}</span>
              {i === 9 && (
                <PlayMarker>
                  <svg width="16" height="24" viewBox="0 0 16 24" aria-hidden="true">
                    <path fill="#ea4463" stroke="#14181c" strokeWidth="2" d="M1 1l13 11L1 23z" />
                  </svg>
                </PlayMarker>
              )}
            </PatternButton>
          </li>
        ))}
      </PatternList>
      <PickerScroll>
        <ChromeButton $h={28} aria-label="Picker options"><Pip /></ChromeButton>
      </PickerScroll>
    </PickerBody>
  </Picker>
);

const PlaylistCorner = () => (
  <Corner>
    <CornerShape width="224" height="82" viewBox="0 0 224 82" aria-hidden="true">
      <path fill="#1e282e" d="M0 82L22 10Q25 0 36 0H224V82z" />
      <path fill="#50585e" stroke="#646e74" strokeWidth="2" d="M4 79L24 12Q27 3 36 3H59V79z" />
      <path fill="#50585e" stroke="#646e74" strokeWidth="2" d="M63 3H221V79H63z" />
    </CornerShape>
    <AddTrack aria-label="Add track">
      <svg width="16" height="16" viewBox="0 0 16 16"><path fill="#d9dfe3" d="M6 0h4v6h6v4h-6v6H6v-6H0V6h6z" /></svg>
    </AddTrack>
    <CornerTools>
      <CornerRow>
        <ModeButton aria-label="Audio"><WaveIcon /></ModeButton>
        <ModeButton $on aria-label="Automation"><AutomationIcon size={30} /></ModeButton>
        <ModeButton aria-label="Patterns"><KeysIcon /></ModeButton>
      </CornerRow>
      <CornerRow $inset={4}>
        <Option>STEP<StepBox type="checkbox" /></Option>
        <Option>SLIDE<SlideRadio type="radio" defaultChecked /></Option>
      </CornerRow>
    </CornerTools>
  </Corner>
);

const rulerMarks = Array.from({ length: 29 }, (_, i) => 1 + i * 4);

const TimeRuler = () => (
  <Ruler>
    <RulerSong style={{ width: pct(SONG_END - 1) }} />
    {rulerMarks.map((bar) => (
      <RulerMark key={bar} $off={bar > SONG_END} style={{ left: pct(bar - 1) }}>{bar}</RulerMark>
    ))}
    <PlayHead width="17" height="22" viewBox="0 0 17 22" aria-hidden="true">
      <path fill="#b6e36f" stroke="#1e2a16" strokeWidth="2" d="M0 1h13q3 0 2 4L10 14 0 21z" />
      <path fill="none" stroke="#e6fab8" strokeWidth="2" d="M0 3h13L9 12" />
    </PlayHead>
  </Ruler>
);

const Track = ({ track }: { track: TrackData }) => (
  <TrackRow $h={track.height}>
    <HeadCell>
      <Head $bg={track.color} $ink={track.ink}>
        <TrackName $size={track.size ?? 28}>{track.name}</TrackName>
        {track.height > 32 && <HeadDots><i /><i /><i /></HeadDots>}
        {track.name && <Led type="checkbox" defaultChecked $low={track.height > 32} aria-label={`${track.name} on`} />}
      </Head>
    </HeadCell>
    <PeakStrip />
    <Lane>
      {track.clips?.map((clip, i) => <Clip key={i} clip={clip} body={track.body} />)}
      {track.kicks?.map(([at, to]) => <KickHits key={at} at={at} to={to} />)}
    </Lane>
  </TrackRow>
);

const Arrangement = () => (
  <Playlist>
    <PlaylistCorner />
    <Overview>
      <ChromeButton $w={38} aria-label="Scroll left"><Chevron d="M12 2L6 9l6 7" /></ChromeButton>
      <OverviewTrack>
        <OverviewThumb><SongOverview /></OverviewThumb>
      </OverviewTrack>
      <ChromeButton $w={38} aria-label="Scroll right"><Chevron d="M7 2l7 7-7 7" /></ChromeButton>
    </Overview>
    <SideCell $top={2}><ChromeButton $w={38} aria-label="Playlist options"><Pip /></ChromeButton></SideCell>
    <RulerCell><TimeRuler /></RulerCell>
    <SideCell><ChromeButton $w={38} aria-label="Scroll up"><Chevron d="M1 13l8-8 8 8" /></ChromeButton></SideCell>
    <Tracks>
      <GridUnderlay>
        {Array.from({ length: 58 }, (_, i) => <GridColumn key={i} $alt={Math.floor(i / 2) % 2 === 1} />)}
        <AfterSong style={{ left: pct(SONG_END - 1) }} />
      </GridUnderlay>
      {tracks.map((track, i) => <Track key={i} track={track} />)}
    </Tracks>
    <TracksScroll>
      <ChromeButton $w={36} $h={67} aria-label="Scroll position" />
    </TracksScroll>
  </Playlist>
);

export default function App() {
  return (
    <Window>
      <Global />
      <HostStrip>
        {[598, 59, 80, 393, 1449, 278, 23].map((grow, i) => <HostCell key={i} $grow={grow} />)}
      </HostStrip>
      <Shell>
        <EdgeGrip>
          {[0, 1, 2, 3, 4].map((i) => <GripDot key={i} />)}
        </EdgeGrip>
        <Main>
          <TopBar />
          <Workspace>
            <PatternPicker />
            <Arrangement />
          </Workspace>
        </Main>
        <RightEdge />
      </Shell>
    </Window>
  );
}
